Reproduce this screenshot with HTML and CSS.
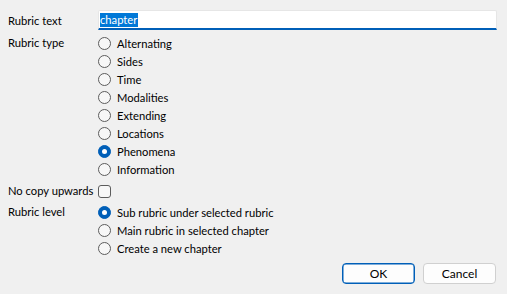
FILE: index.html
```html
<!DOCTYPE html>
<html>
<head>
<meta charset="utf-8">
<link rel="stylesheet" href="styles.css">
</head>
<body>
<div class="dialog">
  <div class="row row-text">
    <div class="label">Rubric text</div>
    <div class="textbox"><span class="sel">chapter</span></div>
  </div>
  <div class="row row-type">
    <div class="label">Rubric type</div>
    <div class="options">
      <div class="opt"><span class="radio"></span>Alternating</div>
      <div class="opt"><span class="radio"></span>Sides</div>
      <div class="opt"><span class="radio"></span>Time</div>
      <div class="opt"><span class="radio"></span>Modalities</div>
      <div class="opt"><span class="radio"></span>Extending</div>
      <div class="opt"><span class="radio"></span>Locations</div>
      <div class="opt"><span class="radio on"></span>Phenomena</div>
      <div class="opt"><span class="radio"></span>Information</div>
    </div>
  </div>
  <div class="row row-check">
    <div class="label">No copy upwards</div>
    <div class="opt"><span class="check"></span></div>
  </div>
  <div class="row row-level">
    <div class="label">Rubric level</div>
    <div class="options">
      <div class="opt"><span class="radio on"></span>Sub rubric under selected rubric</div>
      <div class="opt"><span class="radio"></span>Main rubric in selected chapter</div>
      <div class="opt"><span class="radio"></span>Create a new chapter</div>
    </div>
  </div>
  <div class="buttons">
    <button class="btn default">OK</button>
    <button class="btn">Cancel</button>
  </div>
</div>
</body>
</html>
```

FILE: styles.css
```css
html, body {
  margin: 0;
  padding: 0;
  background: #f0f0f0;
}
body {
  width: 507px;
  height: 294px;
  overflow: hidden;
  font-family: Lato, "Noto Sans", sans-serif;
  font-size: 11.2px;
  color: #000;
}
.dialog {
  display: flex;
  flex-direction: column;
  padding: 10px 10px 0 8px;
}
.row {
  display: grid;
  grid-template-columns: 90px 1fr;
  align-items: start;
}
.label {
  line-height: 18px;
  white-space: nowrap;
}
.row-text {
  align-items: center;
}
.row-text .label {
  padding-top: 1px;
}
.textbox {
  height: 17px;
  background: #fff;
  border: 1px solid #e6e6e6;
  border-bottom: 2px solid #005fb8;
  border-radius: 2px 2px 0 0;
  padding-left: 1px;
  display: flex;
  align-items: center;
  box-sizing: content-box;
}
.sel {
  background: #0078d7;
  color: #fff;
  line-height: 14px;
  padding-right: 1px;
}
.row-type {
  margin-top: 4px;
}
.row-check {
  margin-top: 4px;
}
.row-level {
  margin-top: 3px;
}
.opt {
  display: flex;
  align-items: center;
  height: 18px;
  white-space: nowrap;
}
.radio {
  width: 11px;
  height: 11px;
  border: 1px solid #5c5c5c;
  border-radius: 50%;
  margin-right: 6px;
  background: #f7f7f7;
  flex: none;
  position: relative;
}
.radio.on {
  background: #005fb8;
  border-color: #005fb8;
}
.radio.on::after {
  content: "";
  position: absolute;
  left: 3px;
  top: 3px;
  width: 5px;
  height: 5px;
  border-radius: 50%;
  background: #fff;
}
.check {
  width: 11px;
  height: 11px;
  border: 1px solid #5c5c5c;
  border-radius: 3px;
  background: #f7f7f7;
}
.buttons {
  display: flex;
  justify-content: flex-end;
  gap: 8px;
  margin-top: 6px;
  padding-right: 1px;
}
.btn {
  width: 73px;
  height: 21px;
  font-family: inherit;
  font-size: 12px;
  background: #fdfdfd;
  border: 1px solid #d0d0d0;
  border-radius: 4px;
  padding: 0;
  color: #000;
}
.btn.default {
  border: 1px solid #005fb8;
  box-shadow: inset 0 0 0 0.5px #005fb8;
}
```
